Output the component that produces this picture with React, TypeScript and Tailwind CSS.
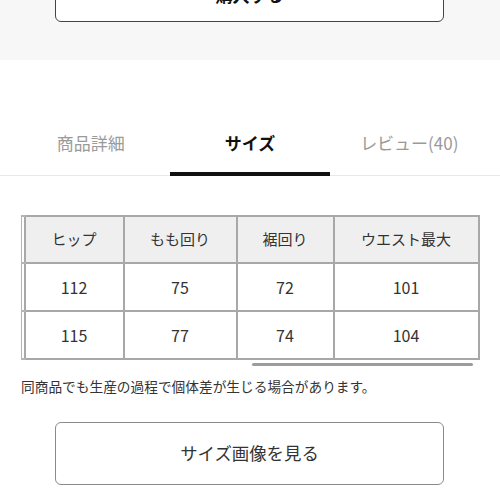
import React from 'react';

const HEADERS = ['ヒップ', 'もも回り', '裾回り', 'ウエスト最大'];
const ROWS = [
    ['112', '75', '72', '101'],
    ['115', '77', '74', '104'],
];
const TABS = ['商品詳細', 'サイズ', 'レビュー(40)'];

export default function App() {
    return (
        <div
            className="w-[500px] h-[500px] overflow-hidden bg-white text-[#333]"
            style={{ fontFamily: '"Noto Sans CJK JP", "Noto Sans", sans-serif' }}
        >
            {/* previous section, scrolled off the top */}
            <div className="flow-root h-[60px] bg-[#f7f7f7] px-[55px]">
                <button className="-mt-[32px] flex h-[54px] w-[389px] items-center justify-center rounded-[6px] border border-[#444] bg-white text-[17px] font-bold text-[#111]">
                    購入する
                </button>
            </div>

            {/* tabs */}
            <div className="mt-[50px] grid h-[66px] grid-cols-3 border-b border-[#e8e8e8] px-[11px]">
                {TABS.map((t, i) => (
                    <div
                        key={t}
                        className={
                            i === 1
                                ? '-mb-px flex items-center justify-center border-b-4 border-[#111] pt-[3px] text-[17px] font-bold text-[#111]'
                                : 'flex items-center justify-center text-[17px] text-[#9a9a9a]'
                        }
                    >
                        {t}
                    </div>
                ))}
            </div>

            {/* size table */}
            <div className="mt-[39px] ml-[21px] w-[457px]">
                <table className="w-[457px] table-fixed border-collapse">
                    <colgroup>
                        <col className="w-[3px]" />
                        <col className="w-[99px]" />
                        <col className="w-[113px]" />
                        <col className="w-[97px]" />
                        <col className="w-[145px]" />
                    </colgroup>
                    <thead>
                        <tr className="h-[47px] bg-[#efefef]">
                            <th className="border-y-2 border-l border-[#b4b4b4] bg-white p-0" />
                            {HEADERS.map((h) => (
                                <th key={h} className="border-2 border-[#a8a8a8] p-0 text-[15px] font-normal text-[#333]">
                                    {h}
                                </th>
                            ))}
                        </tr>
                    </thead>
                    <tbody>
                        {ROWS.map((r, ri) => (
                            <tr key={ri} className="h-[48px]">
                                <td className="border-y-2 border-l border-[#b4b4b4] p-0" />
                                {r.map((v, ci) => (
                                    <td key={ci} className="border-2 border-[#a8a8a8] p-0 text-center text-[16px] text-[#333]">
                                        {v}
                                    </td>
                                ))}
                            </tr>
                        ))}
                    </tbody>
                </table>
                {/* scrollbar thumb */}
                <div className="mt-[3px] ml-[231px] h-[3px] w-[221px] rounded-full bg-[#9c9c9c]" />
            </div>

            <p className="mt-[10px] ml-[21px] text-[13.7px] leading-[20px] text-[#333]">
                同商品でも生産の過程で個体差が生じる場合があります。
            </p>

            <div className="mt-[26px] px-[55px]">
                <button className="flex h-[63px] w-[389px] items-center justify-center rounded-[6px] border border-[#8a8a8a] bg-white text-[17.4px] text-[#333]">
                    サイズ画像を見る
                </button>
            </div>
        </div>
    );
}
